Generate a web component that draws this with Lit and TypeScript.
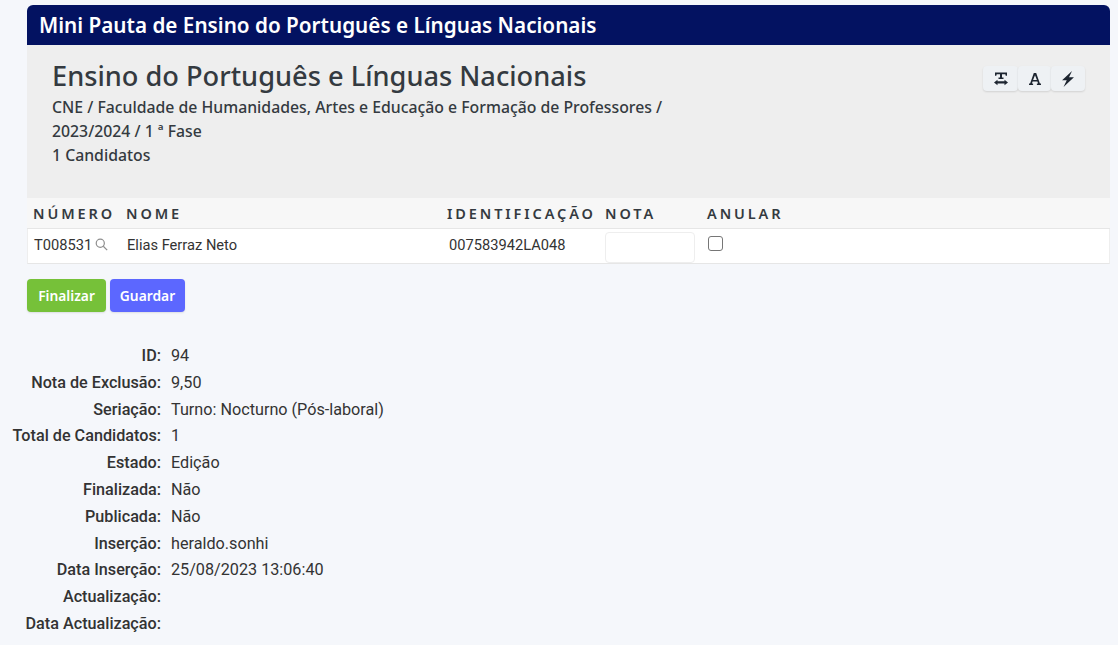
import { LitElement, html, css } from "lit";
import { customElement } from "lit/decorators.js";

const details: [string, string][] = [
  ["ID:", "94"],
  ["Nota de Exclusão:", "9,50"],
  ["Seriação:", "Turno: Nocturno (Pós-laboral)"],
  ["Total de Candidatos:", "1"],
  ["Estado:", "Edição"],
  ["Finalizada:", "Não"],
  ["Publicada:", "Não"],
  ["Inserção:", "heraldo.sonhi"],
  ["Data Inserção:", "25/08/2023 13:06:40"],
  ["Actualização:", ""],
  ["Data Actualização:", ""],
];

@customElement("app-root")
export class AppRoot extends LitElement {
  static styles = css`
    :host { display: block; min-height: 645px; background: #f5f7fb; font-family: Roboto, sans-serif; color: #333; overflow: hidden; box-sizing: border-box; padding-top: 5px; }
    .card { margin: 0 8px 0 27px; }
    .bar { height: 40px; box-sizing: border-box; background: #031261; color: #fff; border-radius: 6px 6px 0 0; padding: 0 12px; display: flex; align-items: center; font: 600 20.7px "Noto Sans", sans-serif; }
    .hero { height: 153px; box-sizing: border-box; background: #eee; padding: 13px 24px 0 25px; display: flex; justify-content: space-between; align-items: flex-start; color: #343a40; }
    .hero h1 { margin: 0 0 2px; font: 500 27.2px/36px "Noto Sans", sans-serif; color: #343a40; }
    .hero p { margin: -1px 0 0; font: 500 15.8px/24px "Noto Sans", sans-serif; width: 640px; }
    .tools { display: flex; margin: 8px 1px 0 0; }
    .tools button { height: 25px; border: 0; padding: 0; display: flex; align-items: center; justify-content: center; background: #eef1f4; border-radius: 4px; box-shadow: 0 1px 2px rgba(0,0,0,.12); }
    .t1 { width: 35px; }
    .t2 { width: 33px; }
    .t3 { width: 34px; }
    .tools svg { width: 14px; height: 14px; fill: #1d2530; }
    .tools .t3 svg { width: 16px; height: 16px; }
    .row { display: grid; grid-template-columns: 93px 321px 158px 102px 1fr; }
    .head { height: 31px; box-sizing: border-box; background: #f7f7f7; border-bottom: 1px solid #e6e6e6; align-items: center; padding-left: 6px; font: 600 14.5px "Noto Sans", sans-serif; letter-spacing: 2.9px; color: #343a40; }
    .body { grid-template-rows: 34px; box-sizing: border-box; background: #fff; border-bottom: 1px solid #e6e6e6; border-left: 1px solid #eee; border-right: 1px solid #eee; align-items: center; padding: 0 0 0 5px; font-size: 14.67px; color: #333; }
    .num { display: flex; align-items: center; gap: 3px; padding-left: 1px; margin-bottom: 3px; }
    .num svg { width: 13px; height: 13px; fill: none; stroke: #8f8f8f; stroke-width: 1.5; }
    .name { padding-left: 1px; margin-bottom: 3px; }
    .ident { padding-left: 2px; margin-bottom: 3px; }
    .note { width: 90px; height: 31px; box-sizing: border-box; border: 1px solid #eee; border-radius: 4px; background: #fff; padding: 0; display: block; margin-top: 3px; }
    .chk { width: 15px; height: 15px; margin: 0 0 5px 1px; display: block; box-sizing: border-box; appearance: none; border: 1px solid #767676; border-radius: 3px; background: #fff; }
    .actions { display: flex; gap: 4px; margin-top: 15px; }
    .btn { height: 33px; border: 0; border-radius: 4px; color: #fff; font: 600 13.8px "Noto Sans", sans-serif; padding: 0; box-shadow: 0 1px 2px rgba(0,0,0,.1); }
    .ok { width: 79px; background: #76c139; }
    .save { width: 75px; background: #5c67ff; }
    dl { margin: 31px 0 0; display: grid; grid-template-columns: 161px 1fr; grid-auto-rows: 26.8px; column-gap: 10px; font-size: 16.2px; line-height: 26.8px; color: #333; }
    dt { text-align: right; font-weight: 500; margin: 0; }
    dd { margin: 0; }
  `;

  render() {
    return html`
      <div class="card">
        <div class="bar">Mini Pauta de Ensino do Português e Línguas Nacionais</div>
        <div class="hero">
          <div>
            <h1>Ensino do Português e Línguas Nacionais</h1>
            <p>CNE / Faculdade de Humanidades, Artes e Educação e Formação de Professores / 2023/2024 / 1 ª Fase<br />1 Candidatos</p>
          </div>
          <div class="tools">
            <button class="t1" aria-label="Espaçamento">
              <svg viewBox="0 0 14 14"><path d="M1 .5h12v3.200h-1.300l-.4-1.500H8v3.300h1.500v1.400h-5V5.500H6V2.200H2.700l-.4 1.500H1zM3.500 7.800v1.500h7V7.800L14 10.500l-3.500 2.700v-1.600h-7v1.600L0 10.500z" /></svg>
            </button>
            <button class="t2" aria-label="Fonte">
              <svg viewBox="0 0 14 14"><path d="M5.800 1h2.400l3.700 10.600h1.100V13H8.900v-1.400h1.200l-.7-2.200H4.600l-.7 2.200h1.200V13H1v-1.400h1.100zM7 3.200 5.100 7.900h3.800z" /></svg>
            </button>
            <button class="t3" aria-label="Raio">
              <svg viewBox="0 0 14 14"><path d="M10.500 0 1.800 8h4.100l-2.800 6 9.100-8.500H7.900z" /></svg>
            </button>
          </div>
        </div>
        <div class="row head">
          <span>NÚMERO</span><span>NOME</span><span>IDENTIFICAÇÃO</span><span>NOTA</span><span>ANULAR</span>
        </div>
        <div class="row body">
          <span class="num">T008531<svg viewBox="0 0 16 16"><circle cx="6.500" cy="6.500" r="5" /><path d="M10.200 10.200 15 15" /></svg></span>
          <span class="name">Elias Ferraz Neto</span>
          <span class="ident">007583942LA048</span>
          <span><input class="note" aria-label="Nota" /></span>
          <span><input class="chk" type="checkbox" aria-label="Anular" /></span>
        </div>
        <div class="actions">
          <button class="btn ok">Finalizar</button>
          <button class="btn save">Guardar</button>
        </div>
      </div>
      <dl>
        ${details.map(([k, v]) => html`<dt>${k}</dt><dd>${v}</dd>`)}
      </dl>
    `;
  }
}
